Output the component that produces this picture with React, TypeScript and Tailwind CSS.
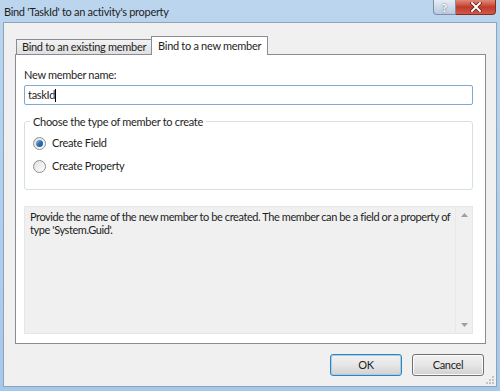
import React from 'react';

function Radio({ checked, label }: { checked?: boolean; label: string }) {
  return (
    <div className="flex items-center h-[23px]">
      <div className="w-[13px] h-[13px] rounded-full border border-[#8e8f8f] bg-gradient-to-br from-[#e0e0e0] to-[#ffffff] flex items-center justify-center">
        {checked && (
          <div className="w-[7px] h-[7px] rounded-full bg-gradient-to-br from-[#8fc6f5] via-[#2c6fb7] to-[#1a4f8c]" />
        )}
      </div>
      <span className="ml-[6px] text-[11px] text-[#1e1e1e]">{label}</span>
    </div>
  );
}

function Button({ label, primary }: { label: string; primary?: boolean }) {
  return (
    <button
      className={`w-[72px] h-[22px] rounded-[3px] border text-[11px] text-[#1e1e1e] bg-gradient-to-b from-[#f2f2f2] via-[#e6e6e6] to-[#d1d1d1] ${
        primary ? 'border-[#3c7fb1] shadow-[inset_0_0_0_1px_#9ad3f2]' : 'border-[#707070] shadow-[inset_0_0_0_1px_#fcfcfc]'
      }`}
    >
      {label}
    </button>
  );
}

export default function App() {
  return (
    <div className="w-[500px] h-[391px] flex flex-col bg-gradient-to-b from-[#bcd5ee] to-[#a8c8ea] font-['Lato',sans-serif] tracking-[-0.3px] overflow-hidden">
      {/* title bar */}
      <div className="h-[22px] flex justify-between items-start">
        <div className="pl-[4px] pt-[4px] text-[11px] leading-[15px] text-[#1e1e1e]">
          Bind 'TaskId' to an activity's property
        </div>
        <div className="flex mr-[4px]">
          <div className="w-[23px] h-[15px] rounded-bl-[4px] border border-[#7b8fa8] border-t-0 bg-gradient-to-b from-[#e6edf6] to-[#b9c9dc] flex items-center justify-center text-[11px] font-bold leading-none text-white [text-shadow:0_0_2px_#4a5a70]">
            ?
          </div>
          <div className="w-[40px] h-[15px] rounded-br-[4px] border border-[#8a2a1f] border-t-0 border-l-0 bg-gradient-to-b from-[#e0897a] via-[#c13a2b] to-[#cf5a48] flex items-center justify-center">
            <svg width="12" height="10" viewBox="0 0 12 10">
              <path d="M2 1 L10 9 M10 1 L2 9" stroke="#5a1a12" strokeWidth="3.4" strokeLinecap="square" />
              <path d="M2 1 L10 9 M10 1 L2 9" stroke="#ffffff" strokeWidth="2" strokeLinecap="square" />
            </svg>
          </div>
        </div>
      </div>

      {/* client area */}
      <div className="relative mx-[3px] mb-[4px] flex-1 bg-[#f0f0f0] border border-[#8ba3bd] flex flex-col">
        <div className="pl-[11px] pr-[10px] pt-[12px]">
          {/* tabs */}
          <div className="flex items-end h-[19px] pl-[1px] relative z-10">
            <div className="h-[15px] px-[5px] border border-[#898c95] border-b-0 bg-gradient-to-b from-[#f2f2f2] to-[#e0e0e0] text-[11px] leading-[14px] text-[#1e1e1e]">
              Bind to an existing member
            </div>
            <div className="h-[19px] -ml-px mb-[-1px] px-[6px] pt-[2px] border border-[#898c95] border-b-0 bg-white text-[11px] leading-[14px] text-[#1e1e1e]">
              Bind to a new member
            </div>
          </div>
          {/* panel */}
          <div className="h-[290px] bg-white border border-[#898c95] px-[8px] pt-[12px]">
            <div className="text-[11px] leading-[15px] text-[#1e1e1e]">New member name:</div>
            <div className="mt-[3px] w-[449px] h-[20px] border border-[#7fa9d3] rounded-[2px] bg-white px-[3px] flex items-center text-[11px] text-[#1e1e1e]">
              taskId<span className="w-px h-[13px] bg-black" />
            </div>

            {/* group box */}
            <div className="relative mt-[16px] w-[449px] h-[69px] border border-[#d5dfe5] rounded-[3px] pl-[8px] pt-[10px]">
              <div className="absolute -top-[8px] left-[5px] px-[3px] bg-white text-[11px] leading-[15px] text-[#1e1e1e]">
                Choose the type of member to create
              </div>
              <Radio checked label="Create Field" />
              <Radio label="Create Property" />
            </div>

            {/* description */}
            <div className="mt-[16px] w-[449px] h-[128px] bg-[#f0f0f0] border border-[#e6e6e6] flex">
              <div className="flex-1 pl-[5px] pt-[3px] text-[11px] leading-[13px] tracking-[-0.42px] text-[#1e1e1e]">
                Provide the name of the new member to be created. The member can be a field or a property of type 'System.Guid'.
              </div>
              <div className="w-[17px] flex flex-col justify-between items-center py-[6px] border-l border-[#e8e8e8]">
                <svg width="7" height="4" viewBox="0 0 7 4">
                  <path d="M0 4 L3.5 0 L7 4 Z" fill="#a0a0a0" />
                </svg>
                <svg width="7" height="4" viewBox="0 0 7 4">
                  <path d="M0 0 L3.5 4 L7 0 Z" fill="#a0a0a0" />
                </svg>
              </div>
            </div>
          </div>
        </div>

        {/* buttons */}
        <div className="flex justify-end gap-[10px] pr-[12px] mt-[10px]">
          <Button label="OK" primary />
          <Button label="Cancel" />
        </div>

        {/* size grip */}
        <svg className="absolute right-[1px] bottom-[1px]" width="10" height="10" viewBox="0 0 10 10">
          <rect x="7" y="1" width="2" height="2" fill="#c4c4c4" />
          <rect x="4" y="4" width="2" height="2" fill="#c4c4c4" />
          <rect x="7" y="4" width="2" height="2" fill="#c4c4c4" />
          <rect x="1" y="7" width="2" height="2" fill="#c4c4c4" />
          <rect x="4" y="7" width="2" height="2" fill="#c4c4c4" />
          <rect x="7" y="7" width="2" height="2" fill="#c4c4c4" />
        </svg>
      </div>
    </div>
  );
}
